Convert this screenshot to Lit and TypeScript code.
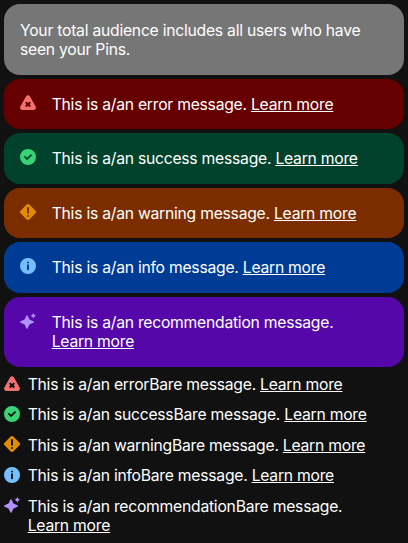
import { LitElement, html, css, svg } from "lit";
import { customElement, property } from "lit/decorators.js";

const icons: Record<string, unknown> = {
  error: svg`<path fill="currentColor" fill-rule="evenodd" d="M9.9 1.2a2.25 2.25 0 0 0-3.800 0L.4 11.400C-.5 13 .6 15 2.400 15h11.200c1.800 0 2.900-2 2-3.600zM5 7.800 6.400 6.400 8 7.900l1.600-1.500L11 7.800 9.500 9.300 11 10.800l-1.400 1.400L8 10.700l-1.600 1.500L5 10.800l1.500-1.500z"/>`,
  success: svg`<path fill="currentColor" fill-rule="evenodd" d="M8 0a8 8 0 1 0 0 16A8 8 0 0 0 8 0zm4.200 6.200-5.100 5.100-3.300-3.200 1.300-1.300 2 1.900 3.800-3.800z"/>`,
  warning: svg`<path fill="currentColor" fill-rule="evenodd" d="M6.700.55a1.900 1.900 0 0 1 2.600 0l6.150 6.150a1.900 1.900 0 0 1 0 2.600L9.300 15.450a1.900 1.900 0 0 1-2.600 0L.55 9.300a1.900 1.900 0 0 1 0-2.600zM7 4v4.800a1 1 0 0 0 2 0V4a1 1 0 0 0-2 0zM8 11a1 1 0 1 0 0 2 1 1 0 0 0 0-2z"/>`,
  info: svg`<path fill="currentColor" fill-rule="evenodd" d="M8 0a8 8 0 1 0 0 16A8 8 0 0 0 8 0zm0 3.500a1 1 0 1 1 0 2 1 1 0 0 1 0-2zM7 7.300a1 1 0 0 1 2 0v4a1 1 0 0 1-2 0z"/>`,
  recommendation: svg`<path fill="currentColor" d="M6.300 2.800Q7 1.800 7.700 2.800L9.200 6Q9.400 6.600 10 6.800L13.400 8.300Q14.500 9 13.400 9.700L10 11.200Q9.400 11.400 9.200 12L7.700 15.300Q7 16.400 6.300 15.300L4.800 12Q4.600 11.400 4 11.200L.6 9.700Q-.5 9 .6 8.300L4 6.800Q4.600 6.600 4.800 6zM13.300 0l.95 1.750L16 2.700l-1.750.95-.95 1.750-.95-1.750-1.750-.95 1.750-.95z"/>`,
};

@customElement("slim-banner")
class SlimBanner extends LitElement {
  @property() kind = "neutral";
  @property({ type: Boolean, reflect: true }) bare = false;

  static styles = css`
    :host { display: block; }
    .box {
      display: flex;
      box-sizing: border-box;
      min-height: 50.5px;
      padding: 16px 16px 15.5px;
      border-radius: 16px;
      color: #fff;
      font: 15.7px/19px Inter, "Liberation Sans", sans-serif;
      letter-spacing: -0.24px;
    }
    .text { flex: 1; min-width: 0; }
    .link { text-decoration: underline; white-space: nowrap; }
    svg { display: block; flex: none; width: 16px; height: 16px; margin-right: 15.7px; }
    .neutral { background: #767676; min-height: 70.5px; padding: 16.5px 16px 16px; }
    .error { background: #660000; }
    .success { background: #00422c; }
    .warning { background: #7c2d00; }
    .info { background: #003c96; }
    .recommendation { background: #5507a9; min-height: 70.5px; }
    .error svg { color: #f47171; }
    .success svg { color: #39d377; }
    .warning svg { color: #e18d00; }
    .info svg { color: #75bfff; }
    .recommendation svg { color: #b190ff; }
    :host([bare]) .box { background: none; padding: 0; min-height: 0; border-radius: 0; }
    :host([bare]) svg { margin-top: 0.5px; margin-right: 7.7px; }
  `;

  render() {
    if (this.kind === "neutral") {
      return html`<div class="box neutral"><div class="text">Your total audience includes all users who have seen your Pins.</div></div>`;
    }
    return html`<div class="box ${this.kind}">
      <svg viewBox="0 0 16 16" aria-hidden="true">${icons[this.kind]}</svg>
      <div class="text">This is a/an ${this.kind}${this.bare ? "Bare" : ""} message. <span class="link">Learn more</span></div>
    </div>`;
  }
}

@customElement("app-root")
class AppRoot extends LitElement {
  static styles = css`
    :host { display: block; box-sizing: border-box; height: 543px; padding: 4px; background: #111; overflow: hidden; }
    .filled { display: flex; flex-direction: column; gap: 4px; }
    .bare { display: flex; flex-direction: column; gap: 11.4px; padding-top: 8px; padding-right: 16px; }
  `;

  render() {
    const kinds = ["error", "success", "warning", "info", "recommendation"];
    return html`
      <div class="filled">
        <slim-banner></slim-banner>
        ${kinds.map((k) => html`<slim-banner kind=${k}></slim-banner>`)}
      </div>
      <div class="bare">${kinds.map((k) => html`<slim-banner kind=${k} bare></slim-banner>`)}</div>
    `;
  }
}
